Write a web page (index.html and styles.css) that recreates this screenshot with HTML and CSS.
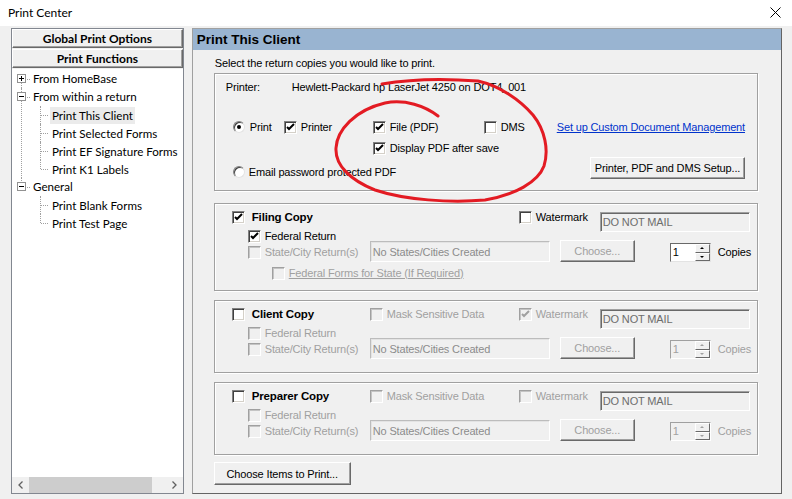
FILE: index.html
```html
<!DOCTYPE html>
<html lang="en">
<head>
    <meta charset="UTF-8">
    <title>Print Center</title>
    <link rel="stylesheet" href="styles.css">
</head>
<body>
    <div class="titlebar">
        <span class="title">Print Center</span>
        <svg class="close" width="11" height="11" viewBox="0 0 11 11"><path d="M0.5 0.5L10.5 10.5M10.5 0.5L0.5 10.5"/></svg>
    </div>

    <div class="main">
        <!-- left navigation -->
        <div class="sidebar">
            <div class="side-btn">Global Print Options</div>
            <div class="side-btn">Print Functions</div>
            <div class="tree-wrap">
                <ul class="tree">
                    <li>
                        <div class="node"><span class="exp plus"></span>From HomeBase</div>
                    </li>
                    <li>
                        <div class="node"><span class="exp"></span>From within a return</div>
                        <ul class="children">
                            <li><span class="leaf sel">Print This Client</span></li>
                            <li><span class="leaf">Print Selected Forms</span></li>
                            <li><span class="leaf">Print EF Signature Forms</span></li>
                            <li><span class="leaf">Print K1 Labels</span></li>
                        </ul>
                    </li>
                    <li>
                        <div class="node"><span class="exp"></span>General</div>
                        <ul class="children">
                            <li><span class="leaf">Print Blank Forms</span></li>
                            <li><span class="leaf">Print Test Page</span></li>
                        </ul>
                    </li>
                </ul>
            </div>
            <div class="hscroll">
                <span class="sb-arrow"><svg width="5" height="8" viewBox="0 0 5 8"><path d="M4.5 0.5L1 4L4.5 7.5"/></svg></span>
                <span class="sb-track"><span class="sb-thumb"></span></span>
                <span class="sb-arrow"><svg width="5" height="8" viewBox="0 0 5 8"><path d="M0.5 0.5L4 4L0.5 7.5"/></svg></span>
            </div>
        </div>

        <!-- print options -->
        <div class="panel">
            <div class="panel-head">Print This Client</div>
            <div class="panel-body">
                <div class="hint">Select the return copies you would like to print.</div>

                <div class="group printer-box">
                    <div class="printer-row">
                        <span class="printer-label">Printer:</span>
                        <span>Hewlett-Packard hp LaserJet 4250 on DOT4_001</span>
                    </div>
                    <div class="opt-row">
                        <label class="opt w-print"><span class="radio on"></span>Print</label>
                        <label class="opt w-printer"><span class="cb"><svg viewBox="0 0 11 11"><path d="M2 5l2 2l5-5"/></svg></span>Printer</label>
                        <label class="opt w-file"><span class="cb"><svg viewBox="0 0 11 11"><path d="M2 5l2 2l5-5"/></svg></span>File (PDF)</label>
                        <label class="opt w-dms"><span class="cb"></span>DMS</label>
                        <a class="link" href="#">Set up Custom Document Management</a>
                    </div>
                    <div class="opt-row display-row">
                        <label class="opt"><span class="cb"><svg viewBox="0 0 11 11"><path d="M2 5l2 2l5-5"/></svg></span>Display PDF after save</label>
                    </div>
                    <div class="email-row">
                        <label class="opt"><span class="radio"></span>Email password protected PDF</label>
                        <button class="btn setup-btn">Printer, PDF and DMS Setup...</button>
                    </div>
                </div>

                <div class="group copy-box filing">
                    <div class="copy-head">
                        <label class="opt w-main"><span class="cb"><svg viewBox="0 0 11 11"><path d="M2 5l2 2l5-5"/></svg></span><b>Filing Copy</b></label>
                        <label class="opt w-water"><span class="cb"></span>Watermark</label>
                        <span class="field wm-field">DO NOT MAIL</span>
                    </div>
                    <div class="copy-body">
                        <div class="subs">
                            <label class="opt"><span class="cb"><svg viewBox="0 0 11 11"><path d="M2 5l2 2l5-5"/></svg></span>Federal Return</label>
                            <label class="opt off"><span class="cb"></span>State/City Return(s)</label>
                        </div>
                        <span class="field states">No States/Cities Created</span>
                        <button class="btn off choose">Choose...</button>
                        <span class="spin">
                            <span class="spin-val">1</span>
                            <span class="spin-btns"><span class="up"></span><span class="dn"></span></span>
                        </span>
                        <span class="copies">Copies</span>
                    </div>
                    <div class="fed-forms">
                        <label class="opt off"><span class="cb"></span><u>Federal Forms for State (If Required)</u></label>
                    </div>
                </div>

                <div class="group copy-box short">
                    <div class="copy-head">
                        <label class="opt w-main-sm"><span class="cb"></span><b>Client Copy</b></label>
                        <label class="opt off w-mask"><span class="cb"></span>Mask Sensitive Data</label>
                        <label class="opt off w-water"><span class="cb"><svg viewBox="0 0 11 11"><path d="M2 5l2 2l5-5"/></svg></span>Watermark</label>
                        <span class="field wm-field">DO NOT MAIL</span>
                    </div>
                    <div class="copy-body">
                        <div class="subs">
                            <label class="opt off"><span class="cb"></span>Federal Return</label>
                            <label class="opt off"><span class="cb"></span>State/City Return(s)</label>
                        </div>
                        <span class="field states">No States/Cities Created</span>
                        <button class="btn off choose">Choose...</button>
                        <span class="spin off">
                            <span class="spin-val">1</span>
                            <span class="spin-btns"><span class="up"></span><span class="dn"></span></span>
                        </span>
                        <span class="copies off">Copies</span>
                    </div>
                </div>

                <div class="group copy-box short">
                    <div class="copy-head">
                        <label class="opt w-main-sm"><span class="cb"></span><b>Preparer Copy</b></label>
                        <label class="opt off w-mask"><span class="cb"></span>Mask Sensitive Data</label>
                        <label class="opt off w-water"><span class="cb"></span>Watermark</label>
                        <span class="field wm-field">DO NOT MAIL</span>
                    </div>
                    <div class="copy-body">
                        <div class="subs">
                            <label class="opt off"><span class="cb"></span>Federal Return</label>
                            <label class="opt off"><span class="cb"></span>State/City Return(s)</label>
                        </div>
                        <span class="field states">No States/Cities Created</span>
                        <button class="btn off choose">Choose...</button>
                        <span class="spin off">
                            <span class="spin-val">1</span>
                            <span class="spin-btns"><span class="up"></span><span class="dn"></span></span>
                        </span>
                        <span class="copies off">Copies</span>
                    </div>
                </div>

                <button class="btn items-btn">Choose Items to Print...</button>
            </div>
        </div>
    </div>

    <!-- red marker circle drawn over the PDF options -->
    <svg class="scribble" width="792" height="499" viewBox="0 0 792 499">
        <path d="M382,84 C405,80 440,78 478,81 C500,86 520,100 533,115 C545,130 549,150 544,166 C538,182 515,195 485,200 C450,203 405,200 375,190 C350,180 335,165 336,148 C337,130 355,110 385,103 C405,99 425,106 438,116"/>
    </svg>
</body>
</html>
```

FILE: styles.css
```css
body {
    margin: 0;
    width: 792px;
    height: 499px;
    overflow: hidden;
    position: relative;
    background: #f0f0f0;
    font-family: "Liberation Sans", Arial, sans-serif;
    font-size: 11px;
    letter-spacing: -0.15px;
    color: #000;
}
.titlebar {
    height: 26px;
    background: #fff;
    display: flex;
    align-items: center;
    justify-content: space-between;
    padding: 0 11px 2px 8px;
    box-sizing: border-box;
    font-family: Lato, "Liberation Sans", sans-serif;
    font-size: 12px;
    letter-spacing: 0;
}
.close path {
    stroke: #000;
    stroke-width: 1;
    fill: none;
}
.main {
    display: flex;
    gap: 8px;
    padding: 2px 10px 0 11px;
    height: 466px;
}

/* sidebar */
.sidebar {
    width: 173px;
    border: 1px solid #828790;
    box-sizing: border-box;
    display: flex;
    flex-direction: column;
    background: #f0f0f0;
    font-family: Lato, "Liberation Sans", sans-serif;
    font-size: 12px;
    letter-spacing: 0;
}
.side-btn {
    height: 19px;
    line-height: 17px;
    margin-bottom: 1px;
    text-align: center;
    font-weight: bold;
    background: #f0f0f0;
    border: 1px solid;
    border-color: #fff #696969 #696969 #fff;
    box-shadow: inset -1px -1px 0 #a0a0a0;
    box-sizing: border-box;
}
.tree-wrap {
    flex: 1;
    background: #fff;
    padding-top: 1px;
    overflow: hidden;
    font-size: 11.6px;
    white-space: nowrap;
}
.tree, .children {
    list-style: none;
    margin: 0;
    padding: 0;
}
.tree > li {
    position: relative;
}
.tree > li::before {
    content: '';
    position: absolute;
    left: 9px;
    top: 0;
    bottom: 0;
    border-left: 1px dotted #a0a0a0;
}
.tree > li:first-child::before {
    top: 9px;
}
.tree > li:last-child::before {
    bottom: auto;
    height: 9px;
}
.node {
    position: relative;
    height: 18px;
    line-height: 18px;
    padding-left: 21px;
}
.node::after {
    content: '';
    position: absolute;
    left: 10px;
    top: 9px;
    width: 8px;
    border-top: 1px dotted #a0a0a0;
}
.exp {
    position: absolute;
    left: 5px;
    top: 4px;
    width: 9px;
    height: 9px;
    box-sizing: border-box;
    border: 1px solid #919191;
    background: #fff;
    z-index: 1;
}
.exp::before {
    content: '';
    position: absolute;
    left: 1px;
    top: 3px;
    width: 5px;
    height: 1px;
    background: #000;
}
.exp.plus::after {
    content: '';
    position: absolute;
    left: 3px;
    top: 1px;
    width: 1px;
    height: 5px;
    background: #000;
}
.children li {
    position: relative;
    height: 18px;
    padding-left: 38px;
}
.children li::before {
    content: '';
    position: absolute;
    left: 28px;
    top: 0;
    bottom: 0;
    border-left: 1px dotted #a0a0a0;
}
.children li:last-child::before {
    bottom: 9px;
}
.children li::after {
    content: '';
    position: absolute;
    left: 29px;
    top: 9px;
    width: 7px;
    border-top: 1px dotted #a0a0a0;
}
.leaf {
    display: inline-block;
    height: 17px;
    line-height: 17px;
    margin-top: 1px;
    padding: 0 2px;
}
.leaf.sel {
    background: #ebebeb;
}
.hscroll {
    height: 16px;
    display: flex;
    background: #f0f0f0;
}
.sb-arrow {
    width: 17px;
    display: flex;
    align-items: center;
    justify-content: center;
}
.sb-arrow path {
    fill: none;
    stroke: #606060;
    stroke-width: 1.3;
}
.sb-track {
    flex: 1;
}
.sb-thumb {
    display: block;
    width: 123px;
    height: 100%;
    background: #cdcdcd;
}

/* main panel */
.panel {
    width: 591px;
    border: 1px solid;
    border-color: #a0a0a0 #646464 #646464 #a0a0a0;
    box-sizing: border-box;
    display: flex;
    flex-direction: column;
}
.panel-head {
    height: 21px;
    line-height: 21px;
    padding-left: 4px;
    background: #99b4d1;
    font-weight: bold;
    font-size: 13.5px;
    letter-spacing: 0;
}
.panel-body {
    flex: 1;
    display: flex;
    flex-direction: column;
    padding: 6px 23px 0 21px;
}
.hint {
    height: 14px;
    line-height: 14px;
    padding-left: 1px;
}
.group {
    border: 1px solid #a0a0a0;
    box-shadow: 1px 1px 0 #fff, inset 1px 1px 0 #fff;
    box-sizing: border-box;
}
.printer-box {
    height: 118px;
    margin-top: 3px;
    padding: 5px 12px 0 11px;
}
.printer-row {
    display: flex;
    height: 16px;
    line-height: 16px;
}
.printer-label {
    width: 66px;
}
.opt-row {
    display: flex;
    align-items: center;
    height: 16px;
    margin-top: 24px;
    padding-left: 7px;
}
.display-row {
    margin-top: 5px;
    padding-left: 147px;
}
.email-row {
    display: flex;
    justify-content: space-between;
    align-items: flex-end;
    margin-top: 1px;
    padding-left: 7px;
}
.email-row .opt {
    height: 14px;
}
.opt {
    display: flex;
    align-items: center;
    gap: 4px;
    white-space: nowrap;
}
.opt.off, .copies.off {
    color: #a0a0a0;
}
.w-print { width: 51px; gap: 5px; }
.w-printer { width: 89px; }
.w-file { width: 111px; }
.w-dms { width: 73px; }
.link {
    color: #0033cc;
    white-space: nowrap;
}

/* checkbox and radio */
.cb {
    flex: none;
    width: 13px;
    height: 13px;
    box-sizing: border-box;
    border: 1px solid;
    border-color: #808080 #fff #fff #808080;
    box-shadow: inset 1px 1px 0 #404040, inset -1px -1px 0 #d4d0c8;
    background: #fff;
    display: flex;
}
.cb svg {
    width: 11px;
    height: 11px;
}
.cb path {
    fill: none;
    stroke: #000;
    stroke-width: 2;
}
.off .cb {
    background: #f0f0f0;
    border-color: #a0a0a0 #fff #fff #a0a0a0;
    box-shadow: inset 1px 1px 0 #c4c4c4;
}
.off .cb path {
    stroke: #a0a0a0;
}
.radio {
    flex: none;
    position: relative;
    width: 12px;
    height: 12px;
    border-radius: 50%;
    box-sizing: border-box;
    background: #fff;
    border: 1px solid;
    border-color: #808080 #e3e3e3 #e3e3e3 #808080;
    box-shadow: inset 1px 1px 0 #404040;
}
.radio.on::after {
    content: '';
    position: absolute;
    left: 3px;
    top: 3px;
    width: 4px;
    height: 4px;
    border-radius: 50%;
    background: #000;
}

/* buttons and fields */
.btn {
    font: inherit;
    letter-spacing: inherit;
    color: #000;
    padding: 0;
    background: #f0f0f0;
    border: 1px solid;
    border-color: #fff #696969 #696969 #fff;
    box-shadow: inset -1px -1px 0 #a0a0a0;
    box-sizing: border-box;
}
.btn.off {
    color: #a0a0a0;
}
.setup-btn {
    width: 155px;
    height: 22px;
}
.items-btn {
    align-self: flex-start;
    width: 137px;
    height: 23px;
    margin-top: 7px;
}
.field {
    display: flex;
    align-items: center;
    box-sizing: border-box;
    padding-left: 2px;
    background: #f0f0f0;
    border: 1px solid;
    white-space: nowrap;
}
.wm-field {
    width: 150px;
    height: 20px;
    margin-top: 4px;
    color: #6d6d6d;
    border-color: #a0a0a0 #fff #fff #a0a0a0;
    box-shadow: inset 1px 1px 0 #696969;
}
.states {
    width: 180px;
    height: 21px;
    color: #8c8c8c;
    border-color: #bcbcbc #fff #fff #bcbcbc;
    box-shadow: inset 1px 1px 0 #e3e3e3;
}

/* copy groups */
.copy-box {
    padding: 4px 0 0 17px;
}
.filing {
    height: 88px;
    margin-top: 12px;
}
.short {
    height: 73px;
    margin-top: 9px;
}
.copy-head {
    display: flex;
    align-items: flex-start;
    height: 18px;
}
.copy-head .opt {
    height: 18px;
}
.copy-head b {
    font-size: 11.5px;
    padding-left: 3px;
}
.w-main { width: 287px; }
.w-main-sm { width: 138px; }
.w-mask { width: 149px; }
.w-water { width: 81px; }
.copy-body {
    display: flex;
    align-items: flex-end;
    margin-top: 2px;
    padding-left: 16px;
}
.subs {
    width: 122px;
    display: flex;
    flex-direction: column;
    padding-bottom: 2px;
}
.subs .opt {
    height: 16px;
}
.choose {
    width: 75px;
    height: 22px;
    margin-left: 10px;
}
.spin {
    display: flex;
    width: 41px;
    height: 19px;
    margin-left: 35px;
    box-sizing: border-box;
    background: #fff;
    border: 1px solid;
    border-color: #696969 #e3e3e3 #e3e3e3 #696969;
}
.spin.off {
    background: #f0f0f0;
    color: #a0a0a0;
    border-color: #a0a0a0 #fff #fff #a0a0a0;
}
.spin-val {
    flex: 1;
    line-height: 17px;
    padding-left: 2px;
}
.spin-btns {
    width: 15px;
    display: flex;
    flex-direction: column;
}
.up, .dn {
    flex: 1;
    position: relative;
    background: #f0f0f0;
    border: 1px solid;
    border-color: #fff #696969 #696969 #fff;
}
.up::after, .dn::after {
    content: '';
    position: absolute;
    left: 4px;
    top: 2px;
    border-left: 2px solid transparent;
    border-right: 2px solid transparent;
}
.up::after {
    border-bottom: 2px solid #000;
}
.dn::after {
    border-top: 2px solid #000;
}
.spin.off .up::after {
    border-bottom-color: #a0a0a0;
}
.spin.off .dn::after {
    border-top-color: #a0a0a0;
}
.copies {
    margin-left: 7px;
    margin-bottom: 3px;
    line-height: 14px;
}
.fed-forms {
    margin-top: 3px;
    padding-left: 40px;
}
.fed-forms .opt {
    height: 16px;
}

.scribble {
    position: absolute;
    left: 0;
    top: 0;
    pointer-events: none;
}
.scribble path {
    fill: none;
    stroke: #e31b23;
    stroke-width: 3;
    stroke-linecap: round;
}
```
